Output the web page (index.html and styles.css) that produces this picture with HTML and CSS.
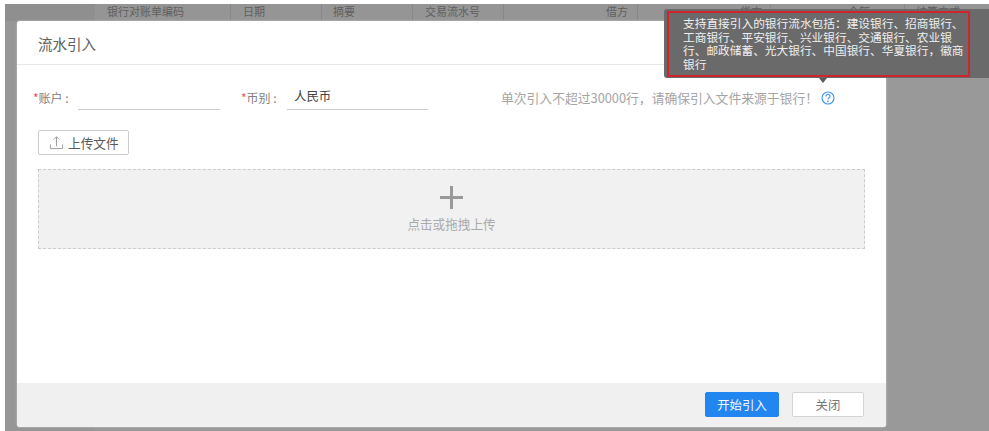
FILE: index.html
```html
<!DOCTYPE html>
<html lang="zh-CN">
<head>
<meta charset="utf-8">
<title>流水引入</title>
<link rel="stylesheet" href="styles.css">
</head>
<body>
<div class="backdrop">
  <div class="table-head">
    <div class="th th-first"></div>
    <div class="th th-code">银行对账单编码</div>
    <div class="th th-date">日期</div>
    <div class="th th-sum">摘要</div>
    <div class="th th-serial">交易流水号</div>
    <div class="th th-debit">借方</div>
    <div class="th th-credit">贷方</div>
    <div class="th th-amount">金额</div>
    <div class="th th-method">结算方式</div>
  </div>
  <div class="table-rest"><div class="rest-first"></div></div>
</div>

<section class="dialog">
  <header class="dialog-head">流水引入</header>
  <div class="dialog-body">
    <div class="form-row">
      <label class="field">
        <span class="label"><i class="req">*</i>账户&nbsp;:</span>
        <input class="input input-account" type="text" value="">
      </label>
      <label class="field field-currency">
        <span class="label"><i class="req">*</i>币别&nbsp;:</span>
        <input class="input input-currency" type="text" value="人民币">
      </label>
      <div class="notice">
        <span>单次引入不超过30000行，请确保引入文件来源于银行！</span>
        <svg class="help" viewBox="0 0 14 14" width="14" height="14" aria-hidden="true">
          <circle cx="7" cy="7" r="6" fill="none" stroke="#4a9bee" stroke-width="1.2"/>
          <path d="M5 5.4a2 2 0 0 1 4 0c0 1.3-2 1.5-2 3" fill="none" stroke="#4a9bee" stroke-width="1.2"/>
          <circle cx="7" cy="10.4" r=".8" fill="#4a9bee"/>
        </svg>
      </div>
    </div>
    <button class="upload-btn" type="button">
      <svg viewBox="0 0 16 16" width="15" height="15" aria-hidden="true">
        <path d="M1.5 10v4.5h13V10M8 12V2M5 4.8 8 1.8l3 3" fill="none" stroke="#999" stroke-width="1"/>
      </svg>
      上传文件
    </button>
    <div class="dropzone">
      <div class="plus"></div>
      <div class="drop-text">点击或拖拽上传</div>
    </div>
  </div>
  <footer class="dialog-foot">
    <button class="btn btn-primary" type="button">开始引入</button>
    <button class="btn btn-close" type="button">关闭</button>
  </footer>
</section>

<div class="tooltip">
  <div class="tooltip-mark">支持直接引入的银行流水包括：建设银行、招商银行、<br>工商银行、平安银行、兴业银行、交通银行、农业银<br>行、邮政储蓄、光大银行、中国银行、华夏银行，徽商<br>银行</div>
</div>
</body>
</html>
```

FILE: styles.css
```css
* { box-sizing: border-box; }
html, body { margin: 0; height: 100%; }
body {
  background: #fff;
  font-family: "Noto Sans CJK SC", "Liberation Sans", sans-serif;
  overflow: hidden;
  width: 989px;
  height: 431px;
  position: relative;
}
.backdrop {
  margin: 4px 0 0 5px;
  height: 427px;
  background: #999;
  display: flex;
  flex-direction: column;
}
.table-head {
  display: flex;
  height: 17px;
  background: #959595;
  font-size: 11px;
  line-height: 14px;
  color: #5f5f5f;
  flex: none;
}
.th { border-right: 1px solid #888; height: 17px; white-space: nowrap; }
.th-first { width: 90px; background: #8f8f8f; border-right: 0; }
.th-code { width: 136px; padding-left: 12px; }
.th-date { width: 91px; padding-left: 12px; }
.th-sum { width: 91px; padding-left: 11px; }
.th-serial { width: 91px; padding-left: 12px; }
.th-debit { width: 134px; padding-left: 102px; }
.th-credit { width: 133px; padding-left: 102px; }
.th-amount { width: 134px; padding-left: 77px; }
.th-method { flex: 1; padding-left: 11px; border-right: 0; }
.table-rest { flex: 1; display: flex; }
.rest-first { width: 90px; background: #969696; }

.dialog {
  position: absolute;
  left: 17px;
  top: 21px;
  width: 869px;
  height: 406px;
  background: #fff;
  border-radius: 3px;
  display: flex;
  flex-direction: column;
  box-shadow: 0 0 2px rgba(255,255,255,.6);
}
.dialog-head {
  height: 44px;
  flex: none;
  border-bottom: 1px solid #e8e8e8;
  padding: 12px 0 0 21px;
  font-size: 14.5px;
  line-height: 21px;
  color: #606060;
}
.dialog-body { flex: 1; padding: 0 21px; }
.form-row {
  display: flex;
  align-items: flex-end;
  height: 45px;
  margin: 0 0 0 -5px;
}
.field { display: flex; align-items: flex-end; font-size: 12px; }
.field-currency { margin-left: 21px; }
.label { color: #808080; line-height: 17px; padding-bottom: 4px; width: 45px; white-space: nowrap; }
.field-currency .label { width: 46px; }
.req { color: #f0505a; font-style: normal; }
.input {
  width: 142px;
  height: 25px;
  border: 0;
  border-bottom: 1px solid #ccc;
  outline: 0;
  padding: 0 0 3px 7px;
  font: 12.4px "Noto Sans CJK SC", sans-serif;
  color: #444;
  background: transparent;
}
.input-currency { width: 141px; }
.notice {
  margin-left: auto;
  margin-right: 30px;
  display: flex;
  align-items: center;
  gap: 3px;
  font-size: 12.8px;
  line-height: 17px;
  color: #a5a5a5;
  padding-bottom: 4px;
}
.help { flex: none; }
.upload-btn {
  display: flex;
  align-items: center;
  gap: 4px;
  width: 91px;
  height: 25px;
  margin-top: 20px;
  padding: 0 0 1px 10px;
  border: 1px solid #ccc;
  border-radius: 2px;
  background: #fff;
  font: 12.7px "Noto Sans CJK SC", sans-serif;
  color: #5a5a5a;
}
.dropzone {
  margin-top: 14px;
  height: 80px;
  border: 1px dashed #ccc;
  background: #f1f1f1;
  display: flex;
  flex-direction: column;
  align-items: center;
  padding-top: 16px;
}
.plus {
  width: 23px;
  height: 23px;
  background:
    linear-gradient(#999, #999) center / 23px 3px no-repeat,
    linear-gradient(#999, #999) center / 3px 23px no-repeat;
}
.drop-text { margin-top: 6px; font-size: 12.6px; line-height: 18px; color: #aaa; }
.dialog-foot {
  height: 44px;
  flex: none;
  background: #f0f0f0;
  border-radius: 0 0 3px 3px;
  display: flex;
  justify-content: flex-end;
  align-items: flex-start;
  gap: 13px;
  padding: 9px 22px 0 0;
}
.btn {
  height: 25px;
  border-radius: 2px;
  font: 12.4px "Noto Sans CJK SC", sans-serif;
  padding: 0;
}
.btn-primary { width: 74px; background: #2186f0; border: 1px solid #2186f0; color: #f4f9ff; }
.btn-close { width: 72px; background: #fff; border: 1px solid #d4d4d4; color: #777; }

.tooltip {
  position: absolute;
  left: 664px;
  right: 0;
  top: 9px;
  height: 69px;
  background: #6a6a6a;
  border-radius: 3px 0 0 3px;
  padding: 2px 19px 0 3px;
}
.tooltip::after {
  content: "";
  position: absolute;
  left: 155px;
  top: 69px;
  border: 4px solid transparent;
  border-top: 5px solid #5a5a5a;
  border-bottom: 0;
}
.tooltip-mark {
  width: 303px;
  height: 66px;
  border: 2px solid #d0242c;
  padding: 3px 0 0 14px;
  color: #f0f0f0;
  font-size: 11.7px;
  line-height: 13.7px;
  white-space: nowrap;
}
```
